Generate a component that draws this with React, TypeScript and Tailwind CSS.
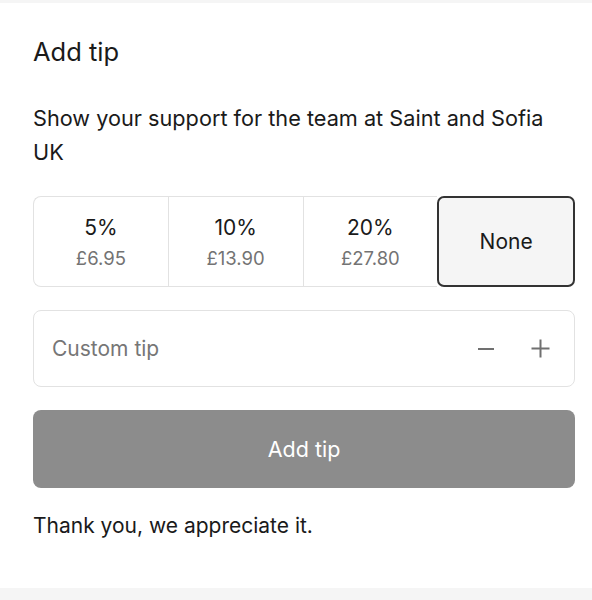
import React from 'react';

const TIPS = [
  { label: '5%', amount: '£6.95' },
  { label: '10%', amount: '£13.90' },
  { label: '20%', amount: '£27.80' },
];

export default function App() {
  return (
    <div className="flex h-[600px] w-full flex-col bg-white text-[#1a1a1a]" style={{ fontFamily: 'Inter, "Noto Sans", sans-serif' }}>
      <div className="h-[3px] bg-[#f5f5f5]" />
      <div className="pl-[33px] pr-[17px]">
        {/* Heading */}
        <h2 className="mt-[33px] text-[25.5px] leading-[32px]">Add tip</h2>
        <p className="mt-[33px] text-[21.7px] leading-[34px]">
          Show your support for the team at Saint and Sofia UK
        </p>

        {/* Tip options */}
        <div className="mt-[27px] flex h-[91px]">
          {TIPS.map((tip, idx) => (
            <button
              key={tip.label}
              className={
                'flex flex-1 flex-col items-center justify-center border-y border-l border-[#e2e2e2] ' +
                (idx === 0 ? 'rounded-l-lg' : '')
              }
            >
              <span className="text-[21px] leading-[28px]">{tip.label}</span>
              <span className="mt-[4px] text-[18.5px] leading-[24px] text-[#737373]">{tip.amount}</span>
            </button>
          ))}
          <button className="flex flex-1 items-center justify-center rounded-[7px] border-2 border-[#333333] bg-[#f5f5f5] text-[21px]">
            None
          </button>
        </div>

        {/* Custom tip */}
        <div className="mt-[23px] flex h-[77px] items-center rounded-lg border border-[#e2e2e2] pl-[18px] pr-[24px]">
          <span className="flex-1 text-[21px] text-[#767676]">Custom tip</span>
          <svg width="18" height="18" viewBox="0 0 18 18" className="mr-[36px]">
            <path d="M1 9h16" stroke="#707070" strokeWidth="2" />
          </svg>
          <svg width="19" height="19" viewBox="0 0 19 19">
            <path d="M0.5 9.5h18M9.5 0.5v18" stroke="#707070" strokeWidth="2" />
          </svg>
        </div>

        {/* Submit */}
        <button className="mt-[23px] flex h-[78px] w-full items-center justify-center rounded-lg bg-[#8c8c8c] text-[21.5px] text-white">
          Add tip
        </button>

        <p className="mt-[23px] text-[21px] leading-[30px]">Thank you, we appreciate it.</p>
      </div>
      <div className="mt-auto h-[12px] bg-[#f5f5f5]" />
    </div>
  );
}
